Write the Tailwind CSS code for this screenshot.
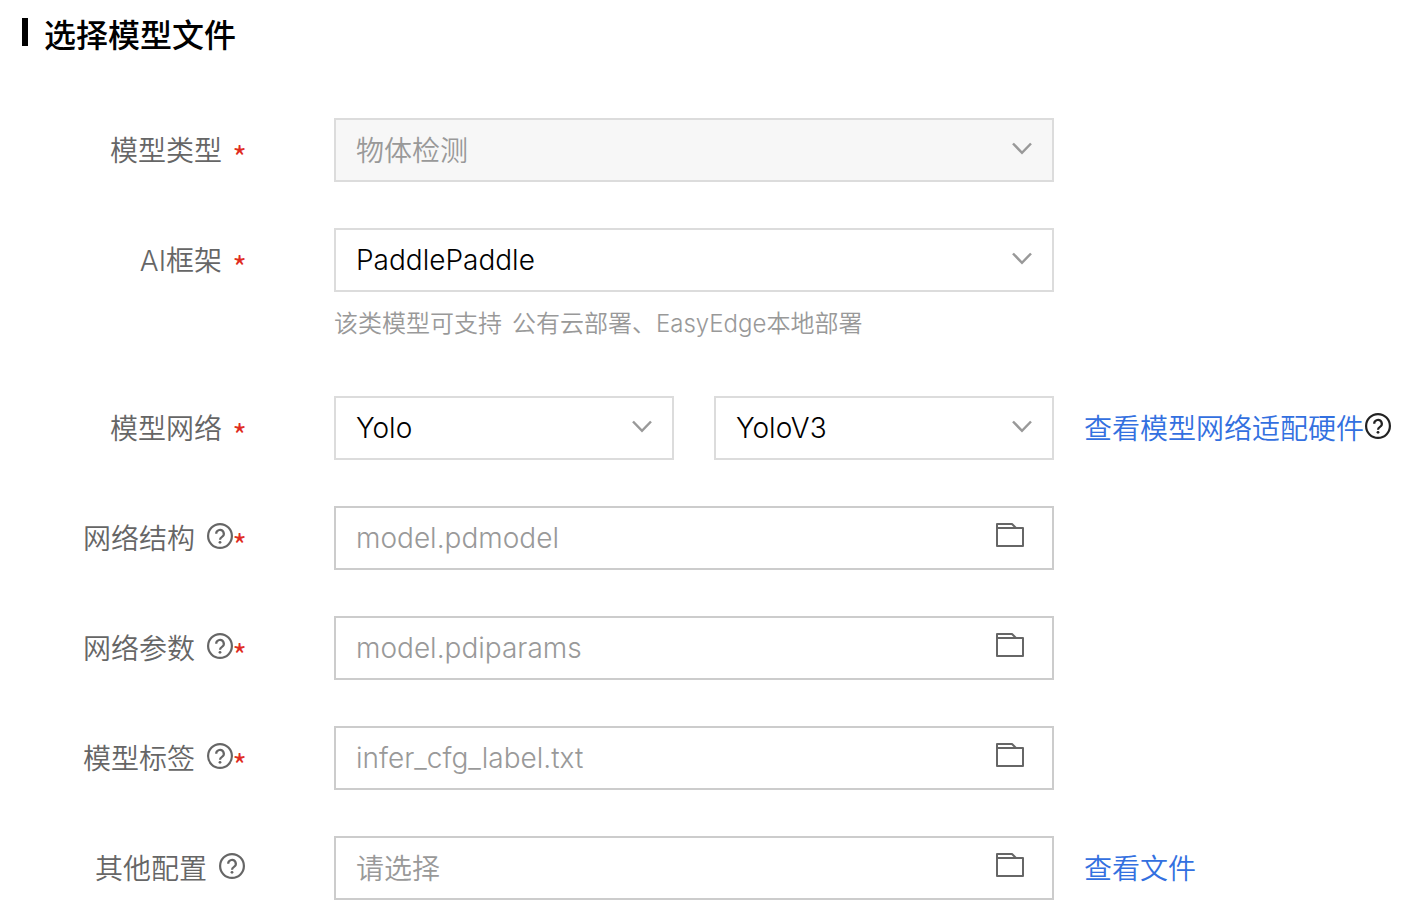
<!DOCTYPE html>
<html lang="zh-CN">
<head>
  <meta charset="UTF-8">
  <meta name="viewport" content="width=device-width, initial-scale=1.0">
  <title>选择模型文件</title>
  <script src="https://cdn.jsdelivr.net/npm/@tailwindcss/browser@4"></script>
</head>
<body class="bg-white font-['Inter','Noto_Sans_CJK_SC',sans-serif] text-[28px] leading-10 font-[350] text-[#666]">
  <!-- 公用图标 -->
  <svg class="hidden">
    <symbol id="arrow" viewBox="0 0 20 14">
      <path d="M1 1.5 L10 10.8 L19 1.5" fill="none" stroke="currentColor" stroke-width="2.5"/>
    </symbol>
    <symbol id="help" viewBox="0 0 26 26">
      <circle cx="13" cy="13" r="11.9" fill="none" stroke="currentColor" stroke-width="2.2"/>
      <path d="M9.2 10.8 a3.8 3.8 0 1 1 5.8 3.1 c-1.3 .8 -2 1.3 -2 2.8" fill="none" stroke="currentColor" stroke-width="2.2"/>
      <circle cx="13" cy="19.3" r="1.4" fill="currentColor"/>
    </symbol>
    <symbol id="folder" viewBox="0 0 28 24">
      <path d="M1 5 V1 H16 L20 5 M1 5 H27 V23 H1 Z" fill="none" stroke="currentColor" stroke-width="2" stroke-linejoin="round"/>
    </symbol>
  </svg>

  <form class="px-[22px] pt-[14px] pb-5">
    <div class="flex items-center h-10 mb-16">
      <span class="w-[6px] h-7 mb-1 bg-black"></span>
      <h2 class="ml-4 pt-[3px] text-[32px] font-medium text-black">选择模型文件</h2>
    </div>

    <div class="flex flex-col gap-[46px]">
      <!-- 模型类型 -->
      <div class="flex">
        <div class="flex items-center justify-end w-56 h-16 pt-[2px] shrink-0">
          <label for="type">模型类型</label>
          <span class="flex justify-center w-[13px] ml-[11px] pt-[10px] font-['Noto_Sans_CJK_SC',sans-serif] text-[32px] text-[#e02b20]">*</span>
        </div>
        <div class="relative flex-1 max-w-[720px] ml-[88px]">
          <select id="type" disabled class="appearance-none w-full h-16 px-5 pt-[2px] border-2 border-[#dcdcdc] bg-[#f7f7f7] text-[#999] opacity-100">
            <option>物体检测</option>
          </select>
          <svg class="absolute right-[22px] top-6 w-5 h-[14px] text-[#999] pointer-events-none"><use href="#arrow"/></svg>
        </div>
      </div>

      <!-- AI框架 -->
      <div class="flex">
        <div class="flex items-center justify-end w-56 h-16 pt-[2px] shrink-0">
          <label for="framework">AI框架</label>
          <span class="flex justify-center w-[13px] ml-[11px] pt-[10px] font-['Noto_Sans_CJK_SC',sans-serif] text-[32px] text-[#e02b20]">*</span>
        </div>
        <div class="relative flex-1 max-w-[720px] ml-[88px]">
          <select id="framework" class="appearance-none w-full h-16 px-5 border-2 border-[#dcdcdc] bg-white text-black">
            <option>PaddlePaddle</option>
          </select>
          <svg class="absolute right-[22px] top-6 w-5 h-[14px] text-[#999] pointer-events-none"><use href="#arrow"/></svg>
          <p class="flex gap-[10px] pt-[14px] pb-2 text-2xl leading-9 text-[#999]"><span>该类模型可支持</span><span>公有云部署、EasyEdge本地部署</span></p>
        </div>
      </div>

      <!-- 模型网络 -->
      <div class="flex">
        <div class="flex items-center justify-end w-56 h-16 pt-[2px] shrink-0">
          <label for="network">模型网络</label>
          <span class="flex justify-center w-[13px] ml-[11px] pt-[10px] font-['Noto_Sans_CJK_SC',sans-serif] text-[32px] text-[#e02b20]">*</span>
        </div>
        <div class="flex flex-1 gap-10 max-w-[720px] ml-[88px]">
          <div class="relative flex-1">
            <select id="network" class="appearance-none w-full h-16 px-5 border-2 border-[#dcdcdc] bg-white text-black">
              <option>Yolo</option>
            </select>
            <svg class="absolute right-[22px] top-6 w-5 h-[14px] text-[#999] pointer-events-none"><use href="#arrow"/></svg>
          </div>
          <div class="relative flex-1">
            <select id="version" aria-label="网络版本" class="appearance-none w-full h-16 px-5 border-2 border-[#dcdcdc] bg-white text-black">
              <option>YoloV3</option>
            </select>
            <svg class="absolute right-[22px] top-6 w-5 h-[14px] text-[#999] pointer-events-none"><use href="#arrow"/></svg>
          </div>
        </div>
        <div class="flex items-center h-16 pt-[2px] ml-[30px] shrink-0">
          <a href="#" class="text-[#3370e0]">查看模型网络适配硬件</a>
          <svg class="w-[26px] h-[26px] ml-px mb-[6px] text-[#222]"><use href="#help"/></svg>
        </div>
      </div>

      <!-- 网络结构 -->
      <div class="flex">
        <div class="flex items-center justify-end w-56 h-16 pt-[2px] shrink-0">
          <label for="structure">网络结构</label>
          <svg class="w-[26px] h-[26px] ml-3 mb-[6px]"><use href="#help"/></svg>
          <span class="flex justify-center w-[13px] pt-[10px] font-['Noto_Sans_CJK_SC',sans-serif] text-[32px] text-[#e02b20]">*</span>
        </div>
        <div class="flex items-center flex-1 max-w-[720px] h-16 ml-[88px] border-2 border-[#ccc]">
          <input id="structure" type="text" placeholder="model.pdmodel" class="flex-1 min-w-0 h-full px-5 outline-none placeholder:text-[#999]">
          <button type="button" aria-label="选择文件" class="mr-7 mb-[6px]"><svg class="block w-7 h-6"><use href="#folder"/></svg></button>
        </div>
      </div>

      <!-- 网络参数 -->
      <div class="flex">
        <div class="flex items-center justify-end w-56 h-16 pt-[2px] shrink-0">
          <label for="params">网络参数</label>
          <svg class="w-[26px] h-[26px] ml-3 mb-[6px]"><use href="#help"/></svg>
          <span class="flex justify-center w-[13px] pt-[10px] font-['Noto_Sans_CJK_SC',sans-serif] text-[32px] text-[#e02b20]">*</span>
        </div>
        <div class="flex items-center flex-1 max-w-[720px] h-16 ml-[88px] border-2 border-[#ccc]">
          <input id="params" type="text" placeholder="model.pdiparams" class="flex-1 min-w-0 h-full px-5 outline-none placeholder:text-[#999]">
          <button type="button" aria-label="选择文件" class="mr-7 mb-[6px]"><svg class="block w-7 h-6"><use href="#folder"/></svg></button>
        </div>
      </div>

      <!-- 模型标签 -->
      <div class="flex">
        <div class="flex items-center justify-end w-56 h-16 pt-[2px] shrink-0">
          <label for="labels">模型标签</label>
          <svg class="w-[26px] h-[26px] ml-3 mb-[6px]"><use href="#help"/></svg>
          <span class="flex justify-center w-[13px] pt-[10px] font-['Noto_Sans_CJK_SC',sans-serif] text-[32px] text-[#e02b20]">*</span>
        </div>
        <div class="flex items-center flex-1 max-w-[720px] h-16 ml-[88px] border-2 border-[#ccc]">
          <input id="labels" type="text" placeholder="infer_cfg_label.txt" class="flex-1 min-w-0 h-full px-5 outline-none placeholder:text-[#999]">
          <button type="button" aria-label="选择文件" class="mr-7 mb-[6px]"><svg class="block w-7 h-6"><use href="#folder"/></svg></button>
        </div>
      </div>

      <!-- 其他配置 -->
      <div class="flex">
        <div class="flex items-center justify-end w-56 h-16 pt-[2px] pr-px shrink-0">
          <label for="other">其他配置</label>
          <svg class="w-[26px] h-[26px] ml-3 mb-[6px]"><use href="#help"/></svg>
        </div>
        <div class="flex items-center flex-1 max-w-[720px] h-16 ml-[88px] border-2 border-[#ccc]">
          <input id="other" type="text" placeholder="请选择" class="flex-1 min-w-0 h-full px-5 pt-[2px] outline-none placeholder:text-[#999]">
          <button type="button" aria-label="选择文件" class="mr-7 mb-[6px]"><svg class="block w-7 h-6"><use href="#folder"/></svg></button>
        </div>
        <div class="flex items-center h-16 pt-[2px] ml-[30px] shrink-0">
          <a href="#" class="text-[#3370e0]">查看文件</a>
        </div>
      </div>
    </div>
  </form>
</body>
</html>
